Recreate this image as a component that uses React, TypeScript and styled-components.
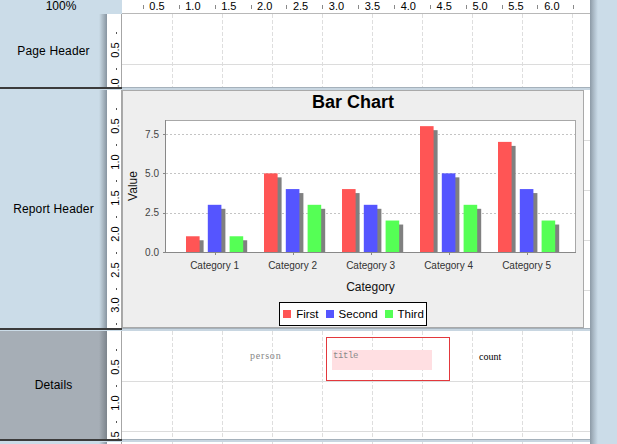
import React from "react";
import styled, { createGlobalStyle } from "styled-components";

const BLUE = "#cbdce8";

const GlobalStyle = createGlobalStyle`
  html, body {
    margin: 0;
    padding: 0;
  }
  body {
    background: ${BLUE};
    font-family: "Liberation Sans", Arial, sans-serif;
    color: #000;
    overflow: hidden;
  }
`;

const Page = styled.div`
  display: flex;
  width: 617px;
  height: 444px;
  overflow: hidden;
`;

const Main = styled.div`
  width: 590px;
  flex-shrink: 0;
  display: flex;
  flex-direction: column;
`;

const RightGutter = styled.div`
  flex: 1;
  background: linear-gradient(to right, #8c9aa6 0, #a6b5c1 3px, #bccdda 6px, ${BLUE} 8px);
`;

/* ---------- top bar ---------- */

const TopBar = styled.div`
  display: flex;
  height: 14px;
  flex-shrink: 0;
`;

const ZoomCell = styled.div`
  width: 122px;
  background: ${BLUE};
  font-size: 12px;
  line-height: 12px;
  text-align: center;
`;

const HRuler = styled.div`
  position: relative;
  flex: 1;
  background: #fff;
  border-bottom: 1px solid #b8b8b8;
  overflow: hidden;
`;

const HRulerNumber = styled.span`
  position: absolute;
  top: 1px;
  font-size: 11px;
  line-height: 11px;
  transform: translateX(-50%);
  white-space: nowrap;
`;

const HRulerTick = styled.span`
  position: absolute;
  top: 5px;
  width: 1px;
  height: 4px;
  background: #8a8a8a;
`;

/* ---------- sections ---------- */

const SectionRow = styled.div<{ $h: number }>`
  display: flex;
  height: ${(p) => p.$h}px;
  flex-shrink: 0;
`;

const SideLabel = styled.div<{ $selected?: boolean }>`
  width: 107px;
  display: flex;
  align-items: center;
  justify-content: center;
  font-size: 12px;
  letter-spacing: 0.15px;
  background: ${(p) =>
    p.$selected
      ? "linear-gradient(to right, #a6aeb6 0 99px, #969ea6 102px, #7c848c 107px)"
      : `linear-gradient(to right, ${BLUE} 0 99px, #b3c2cd 102px, #8794a0 107px)`};
`;

const VRuler = styled.div`
  position: relative;
  width: 14px;
  background: #fff;
  border-right: 1px solid #a6a6a6;
  overflow: hidden;
`;

const VRulerNumber = styled.span`
  position: absolute;
  left: 8px;
  font-size: 11px;
  line-height: 11px;
  white-space: nowrap;
  transform: translate(-50%, -50%) rotate(-90deg);
`;

const VRulerDot = styled.span`
  position: absolute;
  left: 9px;
  width: 1px;
  height: 2px;
  background: #555;
`;

const Canvas = styled.div`
  position: relative;
  flex: 1;
  background: #fff;
  overflow: hidden;

  &::before {
    content: "";
    position: absolute;
    top: 0;
    bottom: 0;
    left: 1px;
    right: 0;
    background-image: repeating-linear-gradient(
      to right,
      transparent 0 49px,
      #dedede 49px 50px
    );
    -webkit-mask-image: repeating-linear-gradient(
      to bottom,
      #000 0 4px,
      transparent 4px 6px
    );
    mask-image: repeating-linear-gradient(
      to bottom,
      #000 0 4px,
      transparent 4px 6px
    );
  }

  &::after {
    content: "";
    position: absolute;
    top: 1px;
    bottom: 0;
    left: 0;
    right: 0;
    background-image: repeating-linear-gradient(
      to bottom,
      transparent 0 49px,
      #dcdcdc 49px 50px
    );
  }
`;

const Divider = styled.div`
  display: flex;
  height: 3px;
  flex-shrink: 0;
`;

const DividerSide = styled.div`
  width: 122px;
  box-sizing: border-box;
  border-top: 2px solid #3b3b3b;
  background: ${BLUE};
`;

const DividerBand = styled.div`
  flex: 1;
  box-sizing: border-box;
  border-top: 1px solid #a5b1bb;
  background: #c8d6e1;
`;

/* ---------- chart ---------- */

const ChartPanel = styled.div`
  position: relative;
  z-index: 1;
  box-sizing: border-box;
  width: 462px;
  height: 238px;
  background: #eeeeee;
  border: 1px solid #a9a9a9;
  display: flex;
  flex-direction: column;
  align-items: center;
`;

const ChartTitle = styled.div`
  height: 22px;
  line-height: 22px;
  font-size: 18px;
  font-weight: bold;
`;

const Legend = styled.div`
  margin-top: 2px;
  box-sizing: border-box;
  height: 24px;
  display: flex;
  align-items: center;
  padding: 0 2px 0 3px;
  background: #fff;
  border: 1px solid #000;
  font-size: 11.5px;
`;

const LegendItem = styled.div`
  display: flex;
  align-items: center;
  gap: 5px;
  & + & {
    margin-left: 7px;
  }
`;

const Swatch = styled.span<{ $color: string }>`
  width: 8px;
  height: 8px;
  background: ${(p) => p.$color};
`;

/* ---------- report fields ---------- */

const Field = styled.div<{ $x: number; $y: number }>`
  position: absolute;
  z-index: 1;
  left: ${(p) => p.$x}px;
  top: ${(p) => p.$y}px;
  font-family: "Liberation Serif", "Times New Roman", serif;
  font-size: 10px;
  line-height: 12px;
  white-space: nowrap;
`;

const MutedField = styled(Field)`
  color: #858585;
  letter-spacing: 0.8px;
`;

const SelectionBox = styled.div`
  position: absolute;
  z-index: 1;
  left: 204px;
  top: 6px;
  width: 124px;
  height: 44px;
  box-sizing: border-box;
  border: 1px solid #e3383c;
`;

const TitleField = styled.div`
  position: absolute;
  z-index: 1;
  left: 210px;
  top: 19px;
  width: 100px;
  height: 20px;
  box-sizing: border-box;
  padding-left: 1px;
  background: #ffdfe2;
  color: #8a8a8a;
  font-family: "Liberation Mono", "Courier New", monospace;
  font-size: 9px;
  letter-spacing: -0.4px;
  line-height: 12px;
`;

/* ---------- data ---------- */

const SERIES = [
  { name: "First", color: "#ff5555" },
  { name: "Second", color: "#5555ff" },
  { name: "Third", color: "#55ff55" },
];

const CATEGORIES = [
  { name: "Category 1", values: [1, 3, 1] },
  { name: "Category 2", values: [5, 4, 3] },
  { name: "Category 3", values: [4, 3, 2] },
  { name: "Category 4", values: [8, 5, 3] },
  { name: "Category 5", values: [7, 4, 2] },
];

const PLOT = { x: 42, y: 7, w: 411, h: 132 };
const UNIT = 15.73;
const yOf = (v: number) => PLOT.y + PLOT.h - v * UNIT;
const catCenter = (i: number) => 91.6 + 78 * i;

function BarPlot() {
  const bottom = PLOT.y + PLOT.h;
  return (
    <svg width="460" height="187" viewBox="0 0 460 187">
      <defs>
        <clipPath id="plot-clip">
          <rect x={PLOT.x} y={PLOT.y} width={PLOT.w} height={PLOT.h} />
        </clipPath>
      </defs>
      <rect
        x={PLOT.x + 0.5}
        y={PLOT.y + 0.5}
        width={PLOT.w - 1}
        height={PLOT.h}
        fill="#fff"
        stroke="#a8a8a8"
      />
      {[2.5, 5, 7.5].map((v) => (
        <line
          key={v}
          x1={PLOT.x + 1}
          x2={PLOT.x + PLOT.w - 1}
          y1={Math.round(yOf(v)) + 0.5}
          y2={Math.round(yOf(v)) + 0.5}
          stroke="#c4c4c4"
          strokeDasharray="2 2"
        />
      ))}
      <g clipPath="url(#plot-clip)">
        {CATEGORIES.map((c, i) =>
          c.values.map((v, j) => {
            const x = catCenter(i) - 28.6 + 21.8 * j;
            const top = yOf(v);
            return (
              <g key={`${i}-${j}`}>
                <rect x={x + 4} y={top + 4} width={13.6} height={bottom - top} fill="#808080" />
                <rect x={x} y={top} width={13.6} height={bottom - top} fill={SERIES[j].color} />
              </g>
            );
          })
        )}
      </g>
      <line x1={PLOT.x} x2={PLOT.x + PLOT.w} y1={bottom + 0.5} y2={bottom + 0.5} stroke="#888" />
      <line x1={PLOT.x + 0.5} x2={PLOT.x + 0.5} y1={PLOT.y} y2={bottom} stroke="#888" />
      {[0, 2.5, 5, 7.5].map((v) => (
        <g key={v}>
          <line
            x1={PLOT.x - 2}
            x2={PLOT.x}
            y1={Math.round(yOf(v)) + 0.5}
            y2={Math.round(yOf(v)) + 0.5}
            stroke="#888"
          />
          <text
            x={PLOT.x - 6}
            y={yOf(v) + 3.5}
            textAnchor="end"
            fontSize="10"
            fill="#444"
            fontFamily="Liberation Sans, Arial, sans-serif"
          >
            {v.toFixed(1)}
          </text>
        </g>
      ))}
      {CATEGORIES.map((c, i) => (
        <g key={c.name}>
          <line
            x1={Math.round(catCenter(i)) + 0.5}
            x2={Math.round(catCenter(i)) + 0.5}
            y1={bottom}
            y2={bottom + 3}
            stroke="#888"
          />
          <text
            x={catCenter(i)}
            y={bottom + 17}
            textAnchor="middle"
            fontSize="10"
            fill="#333"
            fontFamily="Liberation Sans, Arial, sans-serif"
          >
            {c.name}
          </text>
        </g>
      ))}
      <text
        x={PLOT.x + PLOT.w / 2}
        y={178}
        textAnchor="middle"
        fontSize="12"
        fill="#111"
        fontFamily="Liberation Sans, Arial, sans-serif"
      >
        Category
      </text>
      <text
        transform="translate(14 73) rotate(-90)"
        textAnchor="middle"
        fontSize="12"
        fill="#111"
        fontFamily="Liberation Sans, Arial, sans-serif"
      >
        Value
      </text>
    </svg>
  );
}

/* ---------- rulers ---------- */

const STEP = 35.9;

function TopRuler() {
  const ticks = Array.from({ length: 13 }, (_, k) => 21 + 35.85 * k);
  const labels = Array.from({ length: 12 }, (_, k) => k);
  return (
    <HRuler>
      {ticks.map((x) => (
        <HRulerTick key={x} style={{ left: Math.round(x) }} />
      ))}
      {labels.map((k) => (
        <HRulerNumber key={k} style={{ left: 35 + STEP * k }}>
          {((k + 1) * 0.5).toFixed(1)}
        </HRulerNumber>
      ))}
    </HRuler>
  );
}

function SideRuler({ height }: { height: number }) {
  // only marks that at least partly show inside the band
  const dots = Array.from({ length: 12 }, (_, n) => n).filter(
    (n) => 18 + STEP * n < height
  );
  const numbers = Array.from({ length: 12 }, (_, n) => n + 1).filter(
    (n) => STEP * n - 6 < height
  );
  return (
    <VRuler>
      {dots.map((n) => (
        <VRulerDot key={`d${n}`} style={{ top: Math.round(18 + STEP * n) }} />
      ))}
      {numbers.map((n) => (
        <VRulerNumber key={`n${n}`} style={{ top: STEP * n }}>
          {(n * 0.5).toFixed(1)}
        </VRulerNumber>
      ))}
    </VRuler>
  );
}

function Section({
  label,
  height,
  selected,
  children,
}: {
  label?: string;
  height: number;
  selected?: boolean;
  children?: React.ReactNode;
}) {
  return (
    <>
      <SectionRow $h={height}>
        <SideLabel $selected={selected}>{label}</SideLabel>
        <SideRuler height={height} />
        <Canvas>{children}</Canvas>
      </SectionRow>
      <Divider>
        <DividerSide />
        <DividerBand />
      </Divider>
    </>
  );
}

export default function App() {
  return (
    <>
      <GlobalStyle />
      <Page>
        <Main>
          <TopBar>
            <ZoomCell>100%</ZoomCell>
            <TopRuler />
          </TopBar>
          <Section label="Page Header" height={73} />
          <Section label="Report Header" height={238}>
            <ChartPanel>
              <ChartTitle>Bar Chart</ChartTitle>
              <BarPlot />
              <Legend>
                {SERIES.map((s) => (
                  <LegendItem key={s.name}>
                    <Swatch $color={s.color} />
                    {s.name}
                  </LegendItem>
                ))}
              </Legend>
            </ChartPanel>
          </Section>
          <Section label="Details" height={108} selected>
            <MutedField $x={128} $y={19}>
              person
            </MutedField>
            <SelectionBox />
            <TitleField>title</TitleField>
            <Field $x={357} $y={20}>
              count
            </Field>
          </Section>
          <Section height={4} />
        </Main>
        <RightGutter />
      </Page>
    </>
  );
}
